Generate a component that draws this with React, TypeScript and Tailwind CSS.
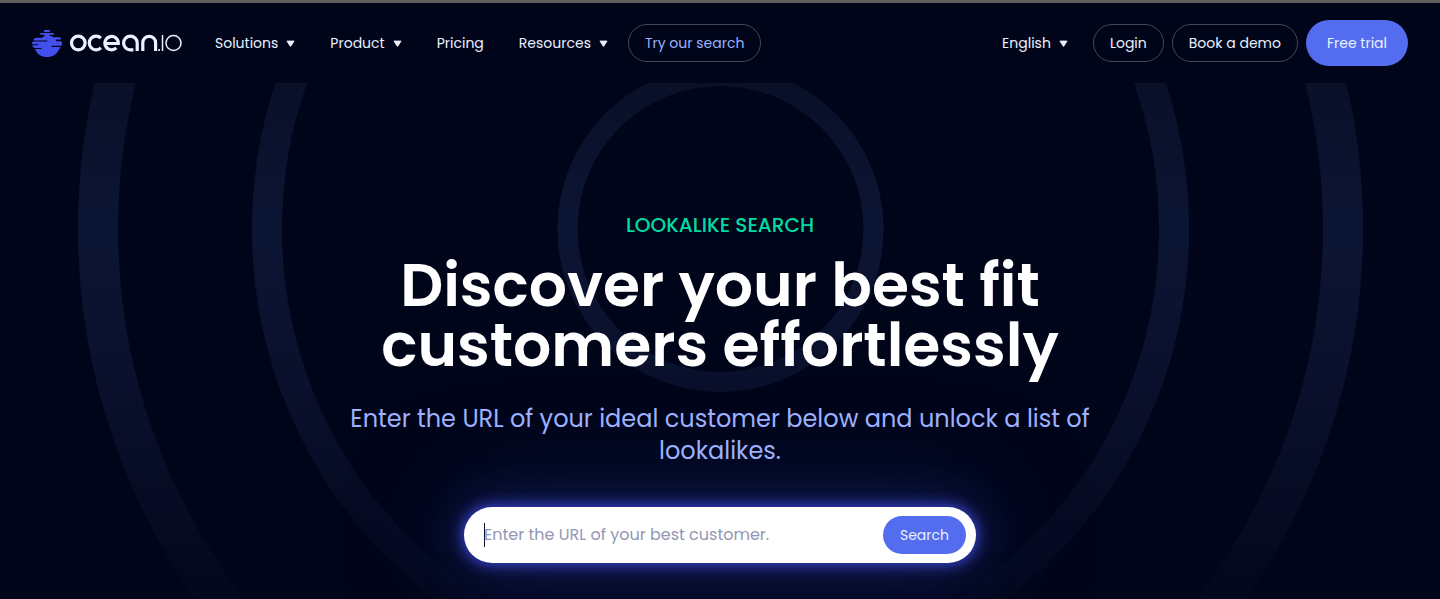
import type { ReactNode } from "react";

const outline =
  "flex h-[38px] items-center rounded-full border border-[#444659] px-4 whitespace-nowrap";

function Caret() {
  return (
    <svg width="9" height="8" viewBox="0 0 9 8" aria-hidden="true">
      <path d="M.9 2h7.200L5 6.900a.6.6 0 0 1-1 0z" fill="#eaf0ff" stroke="#eaf0ff" strokeWidth=".8" strokeLinejoin="round" />
    </svg>
  );
}

function MenuButton({ children }: { children: ReactNode }) {
  return (
    <button type="button" className="flex items-center gap-2 whitespace-nowrap">
      {children}
      <Caret />
    </button>
  );
}

function Logo() {
  return (
    <a href="#" aria-label="ocean.io" className="flex w-[150px] shrink-0">
      <svg width="150" height="28" viewBox="0 0 150 28" fill="none" aria-hidden="true">
        <g fill="#4450ee">
          <rect x="12" y="1" width="6" height="2" rx=".8" />
          <path d="M9 4h12a.9.9 0 0 1 0 1.800h-3.500v1.200H20a.8.8 0 0 1 0 1.200h7.500a1.500 1.500 0 0 1 1.500 1.500v.9h-4.500a.9.9 0 0 0 0 1.700h5a8 8 0 0 1 .5 2.400c0 .800-.2 1.500-.5 2H20a.6.6 0 0 0 0 1.200h8.700c-.5 1.200-1.300 2.400-2 3.100C24.500 25.500 20.500 28 15 28S5.500 25.500 3.300 21a.8.8 0 0 1 .7-1h5a.5.5 0 0 0 0-1H2.500C1.200 18.400.5 17.500.300 16.300H6a.5.5 0 0 0 0-1H0c0-1 .3-2.200.7-2.800H15a.5.5 0 0 0 0-1H1.500c.3-1.700 1-2.800 2.500-2.800h7a.7.7 0 0 1 0-1.200h1.500V5.800H9A.9.9 0 0 1 9 4z" />
        </g>
        <g stroke="#edf1ff" strokeWidth="3.200">
          <circle cx="46.300" cy="14" r="6.800" />
          <path d="M68.900 9.200a6.800 6.800 0 1 0 0 9.600" />
          <path d="M73.500 14.500H86.300A6.700 6.700 0 1 0 84.300 18.900" />
          <path d="M105.200 22V14a6.800 6.800 0 1 0-6.800 6.800h3" />
          <path d="M110.800 22V13.700a6.400 6.400 0 0 1 12.800 0V22" />
        </g>
        <rect x="126.200" y="20.200" width="1.800" height="1.800" fill="#edf1ff" />
        <path d="M130.500 6V22" stroke="#edf1ff" strokeWidth="1.500" />
        <circle cx="141.500" cy="14" r="7.500" stroke="#edf1ff" strokeWidth="1.500" />
      </svg>
    </a>
  );
}

function Header() {
  return (
    <header className="flex h-20 items-center justify-between px-8 text-[14px] text-[#eaf0ff]">
      <nav aria-label="Main" className="flex items-center">
        <Logo />
        <div className="ml-[33px] flex items-center gap-[35px]">
          <MenuButton>Solutions</MenuButton>
          <MenuButton>Product</MenuButton>
          <a href="#" className="whitespace-nowrap">Pricing</a>
          <MenuButton>Resources</MenuButton>
        </div>
        <a href="#" className={outline + " ml-5 text-[#9db1ff]"}>Try our search</a>
      </nav>
      <div className="flex items-center gap-2">
        <div className="mr-[17px] flex">
          <MenuButton>English</MenuButton>
        </div>
        <a href="#" className={outline}>Login</a>
        <a href="#" className={outline}>Book a demo</a>
        <a href="#" className="flex h-[46px] items-center rounded-full bg-[#536dee] px-[21px] whitespace-nowrap">
          Free trial
        </a>
      </div>
    </header>
  );
}

function Rings() {
  return (
    <svg
      className="absolute top-0 left-1/2 -translate-x-1/2"
      width="1440"
      height="516"
      viewBox="0 83 1440 516"
      fill="none"
      aria-hidden="true"
    >
      <defs>
        <linearGradient id="ring" gradientUnits="userSpaceOnUse" x1="0" y1="83" x2="0" y2="599">
          <stop offset="0" stopColor="#091028" />
          <stop offset=".28" stopColor="#0c1534" />
          <stop offset=".6" stopColor="#0a102b" />
          <stop offset="1" stopColor="#03071d" />
        </linearGradient>
      </defs>
      <g stroke="url(#ring)">
        <circle cx="720.500" cy="229" r="153" strokeWidth="20" />
        <circle cx="720.500" cy="229" r="453.500" strokeWidth="30" />
        <circle cx="720.500" cy="229" r="622.500" strokeWidth="40" />
      </g>
    </svg>
  );
}

export default function App() {
  return (
    <div className="min-h-screen overflow-hidden border-t-3 border-[#606060] bg-[#00051a] font-['Poppins','Inter',sans-serif]">
      <Header />
      <main className="relative flex justify-center overflow-hidden px-4 pt-[130px] pb-9">
        <Rings />
        <div className="relative flex w-full max-w-[768px] flex-col items-center text-center">
          <p className="text-[20px] leading-6 font-medium text-[#00dba2]">LOOKALIKE SEARCH</p>
          <h1 className="mt-[18px] text-[60px] leading-[60px] font-semibold text-white">
            Discover your best fit customers effortlessly
          </h1>
          <p className="relative z-10 mt-7 text-[24px] leading-8 text-[#9db1ff]">
            Enter the URL of your ideal customer below and unlock a list of lookalikes.
          </p>
          <form
            className="mt-10 flex h-14 w-full max-w-[512px] items-center rounded-full bg-white pr-[10px] pl-5 shadow-[0_0_14px_2px_#3b45d0,0_0_40px_8px_#16205c99,0_0_100px_12px_#101c4ccc]"
            onSubmit={(e) => e.preventDefault()}
          >
            <span className="-mr-px h-6 w-px shrink-0 bg-[#0a1030]" />
            <input
              type="text"
              aria-label="Company URL"
              placeholder="Enter the URL of your best customer."
              className="min-w-0 flex-1 text-[16px] text-[#0a1030] outline-none placeholder:text-[#9297b5]"
            />
            <button type="submit" className="h-[38px] rounded-full bg-[#536dee] px-[17px] text-[14px] text-[#eaf0ff]">
              Search
            </button>
          </form>
        </div>
      </main>
    </div>
  );
}
